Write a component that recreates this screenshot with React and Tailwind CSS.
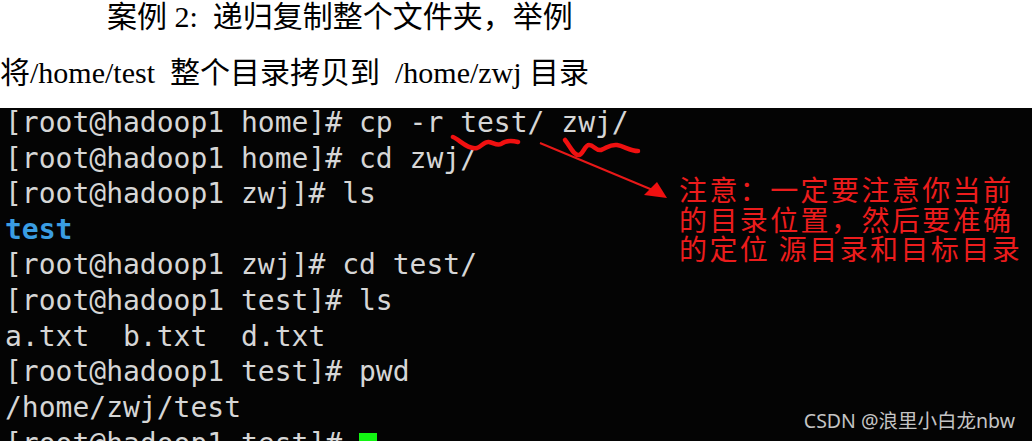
export default function App() {
  const lines = [
    { t: '[root@hadoop1 home]# cp -r test/ zwj/' },
    { t: '[root@hadoop1 home]# cd zwj/' },
    { t: '[root@hadoop1 zwj]# ls' },
    { t: 'test', dir: true },
    { t: '[root@hadoop1 zwj]# cd test/' },
    { t: '[root@hadoop1 test]# ls' },
    { t: 'a.txt  b.txt  d.txt' },
    { t: '[root@hadoop1 test]# pwd' },
    { t: '/home/zwj/test' },
  ]

  return (
    <div className="w-[1032px] h-[441px] overflow-hidden bg-white">
      {/* document text */}
      <div className="h-[108px] text-black font-['Liberation_Serif','Noto_Sans_CJK_SC',serif] text-[30px]">
        <p className="pl-[107px] leading-[34px] whitespace-pre">案例 2:  递归复制整个文件夹，举例</p>
        <p className="mt-[22px] leading-[34px] whitespace-pre">将/home/test  整个目录拷贝到  /home/zwj 目录</p>
      </div>

      {/* terminal screenshot */}
      <div className="relative h-[333px] bg-[#040404] overflow-hidden">
        <div className="-mt-[3px] pl-[5px] font-['DejaVu_Sans_Mono',monospace] text-[28px] leading-[35.6px] text-[#d6d6d6] whitespace-pre">
          {lines.map((l, i) => (
            <div key={i} className={l.dir ? 'text-[#3a9de2] font-bold' : ''}>
              {l.t}
            </div>
          ))}
          <div className="flex items-center">
            <span>[root@hadoop1 test]# </span>
            <span className="w-[18px] h-[28px] mt-[8px] bg-[#12f512]" />
          </div>
        </div>

        {/* red annotation */}
        <svg className="absolute left-0 top-0" width="1032" height="333" viewBox="0 108 1032 333">
          <path
            d="M453 137 C460 140 468 150 477 148 C482 146 485 141 489 142 C494 143 497 146 501 144 C505 141 510 140 518 142"
            fill="none"
            stroke="#f01010"
            strokeWidth="4.5"
            strokeLinecap="round"
          />
          <path
            d="M565 140 C570 146 574 156 579 155 C583 154 585 145 589 145 C594 145 596 151 601 150 C607 148 610 144 617 145 C624 146 630 151 638 151"
            fill="none"
            stroke="#f01010"
            strokeWidth="4.5"
            strokeLinecap="round"
          />
          <line x1="540" y1="143" x2="655" y2="191" stroke="#e81818" strokeWidth="2" />
          <polygon points="667,198 644,195 657,182" fill="#f01010" />
        </svg>
        <div className="absolute left-[679px] top-[67px] text-[#ec1c1c] font-['Noto_Sans_CJK_SC',sans-serif] text-[28px] leading-[29.5px] tracking-[2.4px] whitespace-pre">
          <div>注意：一定要注意你当前</div>
          <div>的目录位置，然后要准确</div>
          <div>的定位 源目录和目标目录</div>
        </div>

        {/* watermark */}
        <div className="absolute right-[17px] bottom-[9px] text-[#c4c4c4] font-['Noto_Sans','Noto_Sans_CJK_SC',sans-serif] text-[19.5px] leading-[22px]">
          CSDN @浪里小白龙nbw
        </div>
      </div>
    </div>
  )
}
